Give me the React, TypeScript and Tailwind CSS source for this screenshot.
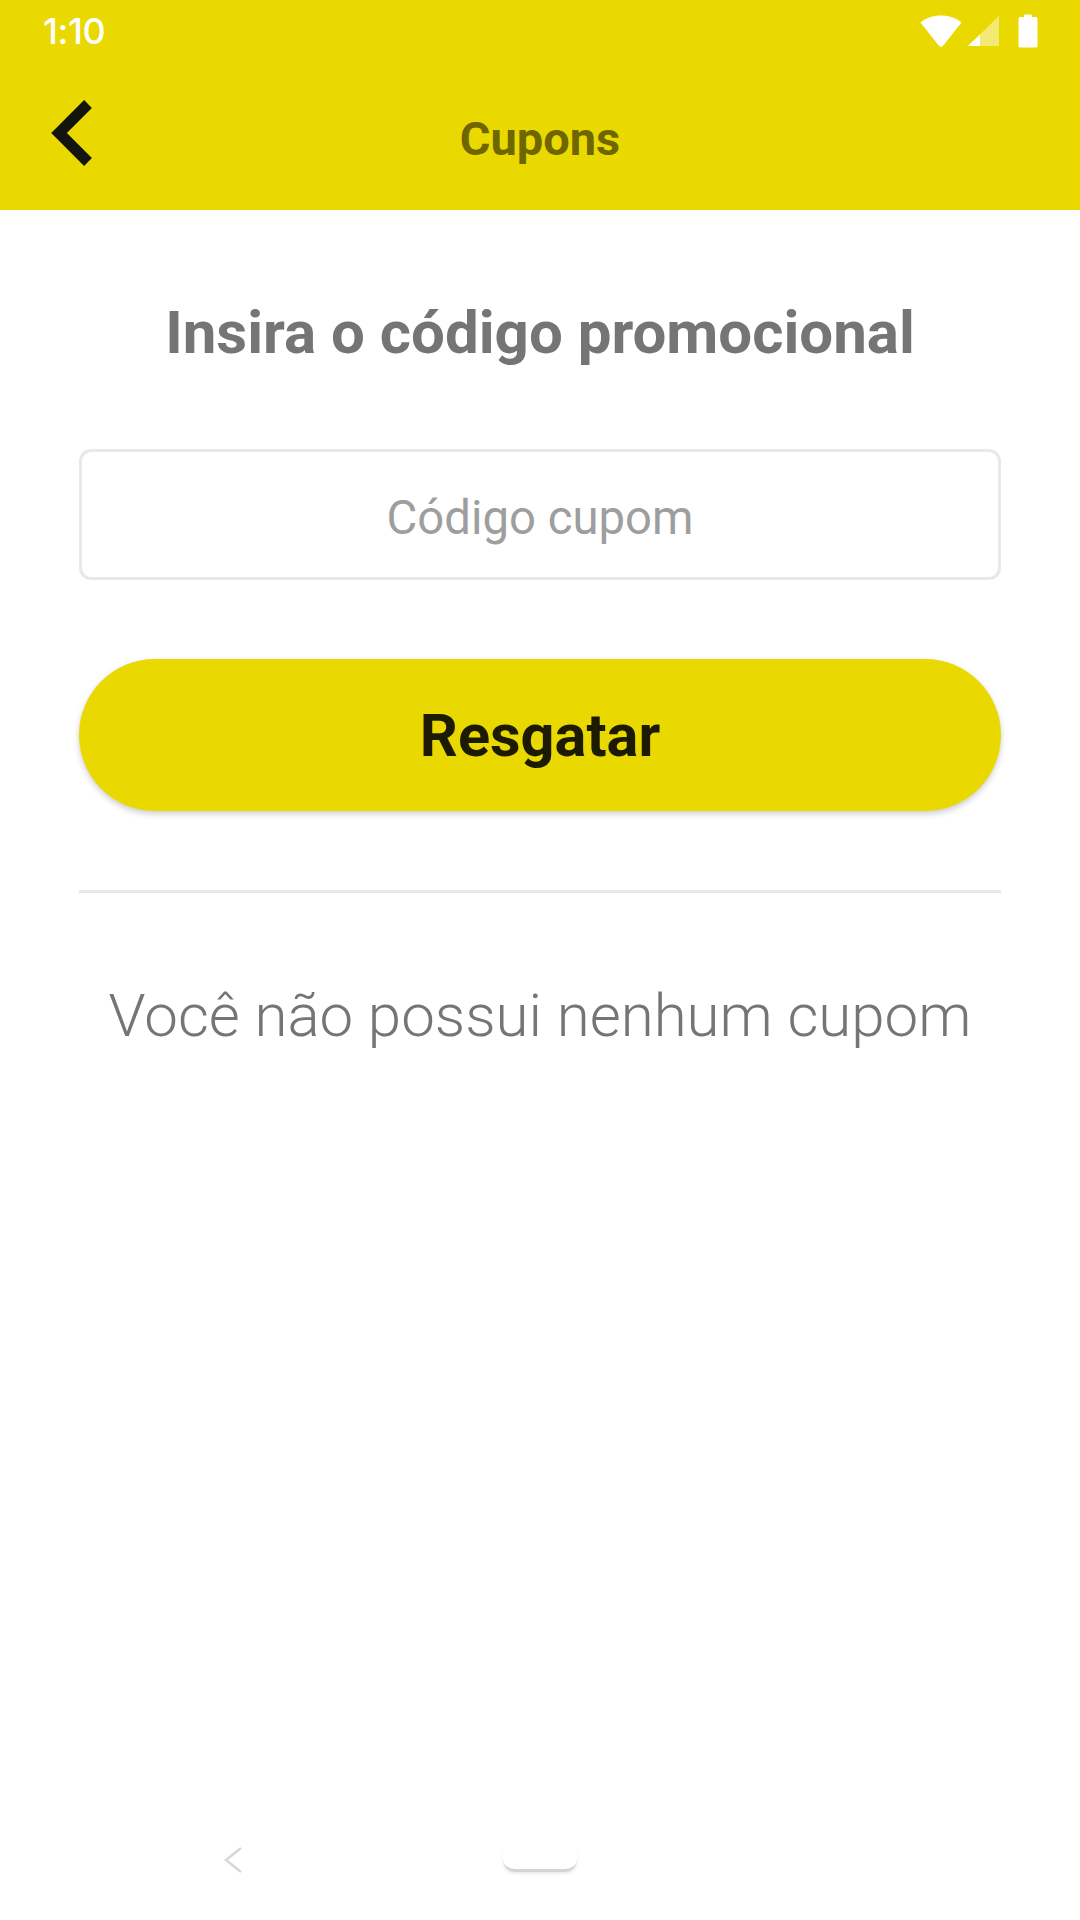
// Cupons screen

function WifiIcon() {
  return (
    <svg width="42" height="32" viewBox="0 0 42 32">
      <path d="M1 7.500C6.500 3.200 13.400 1 21 1s14.500 2.200 20 6.500L22.800 30.500c-.9 1.100-2.700 1.100-3.600 0Z" fill="#fff" stroke="#fff" strokeWidth="1" strokeLinejoin="round" />
    </svg>
  );
}

function SignalIcon() {
  return (
    <svg width="32" height="32" viewBox="0 0 32 32">
      <path d="M31 1V31H0Z" fill="#fff" fillOpacity="0.45" />
      <path d="M12 19.500V31H0Z" fill="#fff" />
    </svg>
  );
}

function BatteryIcon() {
  return (
    <svg width="20" height="34" viewBox="0 0 20 34">
      <path d="M6 3V1.500A1 1 0 0 1 7 .5h6a1 1 0 0 1 1 1V3h4a1.500 1.500 0 0 1 1.500 1.500v27.500A1.500 1.500 0 0 1 18 33.500H2A1.500 1.500 0 0 1 .5 32V4.500A1.500 1.500 0 0 1 2 3Z" fill="#fff" />
    </svg>
  );
}

function StatusBar() {
  return (
    <div className="flex h-[62px] items-center justify-between pl-[43px] pr-[42px]">
      <span className="text-[36px] font-medium text-white font-['Inter',sans-serif] tracking-[-0.4px]">1:10</span>
      <div className="flex items-center gap-[6px]">
        <WifiIcon />
        <SignalIcon />
        <div className="ml-[12px]">
          <BatteryIcon />
        </div>
      </div>
    </div>
  );
}

export default function App() {
  return (
    <div className="flex h-[1920px] w-[1080px] flex-col bg-white font-['Roboto',sans-serif]">
      <header className="h-[210px] bg-[#ead900]">
        <StatusBar />
        <div className="relative flex h-[148px] items-center justify-center pt-[6px]">
          <svg className="absolute left-[49px] top-[37px]" width="44" height="68" viewBox="0 0 44 68">
            <path d="M39 5L10 34L39 63" fill="none" stroke="#14140f" strokeWidth="11" strokeLinecap="butt" />
          </svg>
          <h1 className="text-[47px] font-bold text-[#6f6600]">Cupons</h1>
        </div>
      </header>

      <main className="flex flex-col px-[79px]">
        <h2 className="mt-[88px] text-center text-[60px] leading-[70px] font-bold text-[#757575]">Insira o código promocional</h2>
        <div className="mt-[81px] flex h-[131px] items-center justify-center rounded-[12px] border-[3px] border-[#e8e8e8] pt-[7px]">
          <span className="text-[47.300px] text-[#9e9e9e]">Código cupom</span>
        </div>
        <button className="mt-[79px] h-[152px] rounded-full bg-[#ead900] pt-[4px] text-[59.500px] font-bold text-[#1c1a00] shadow-[0_3px_6px_rgba(0,0,0,0.2)]">Resgatar</button>
        <div className="mt-[79px] h-[3px] bg-[#e8e8e8]" />
        <p className="mt-[81px] text-center text-[60px] leading-[84px] font-light text-[#757575]">Você não possui nenhum cupom</p>
      </main>

      <nav className="mt-auto flex h-[80px] items-start pl-[222px]">
        <svg className="mt-[6px]" width="22" height="28" viewBox="0 0 22 28">
          <path d="M19 2L4 14L19 26" fill="none" stroke="#d8d8d8" strokeWidth="2.500" />
        </svg>
        <div className="ml-[259px] mt-[10px] h-[22px] w-[74px] rounded-b-[12px] border-b-[3px] border-[#d4d4d4] shadow-[0_2px_3px_rgba(0,0,0,0.08)]" />
      </nav>
    </div>
  );
}
